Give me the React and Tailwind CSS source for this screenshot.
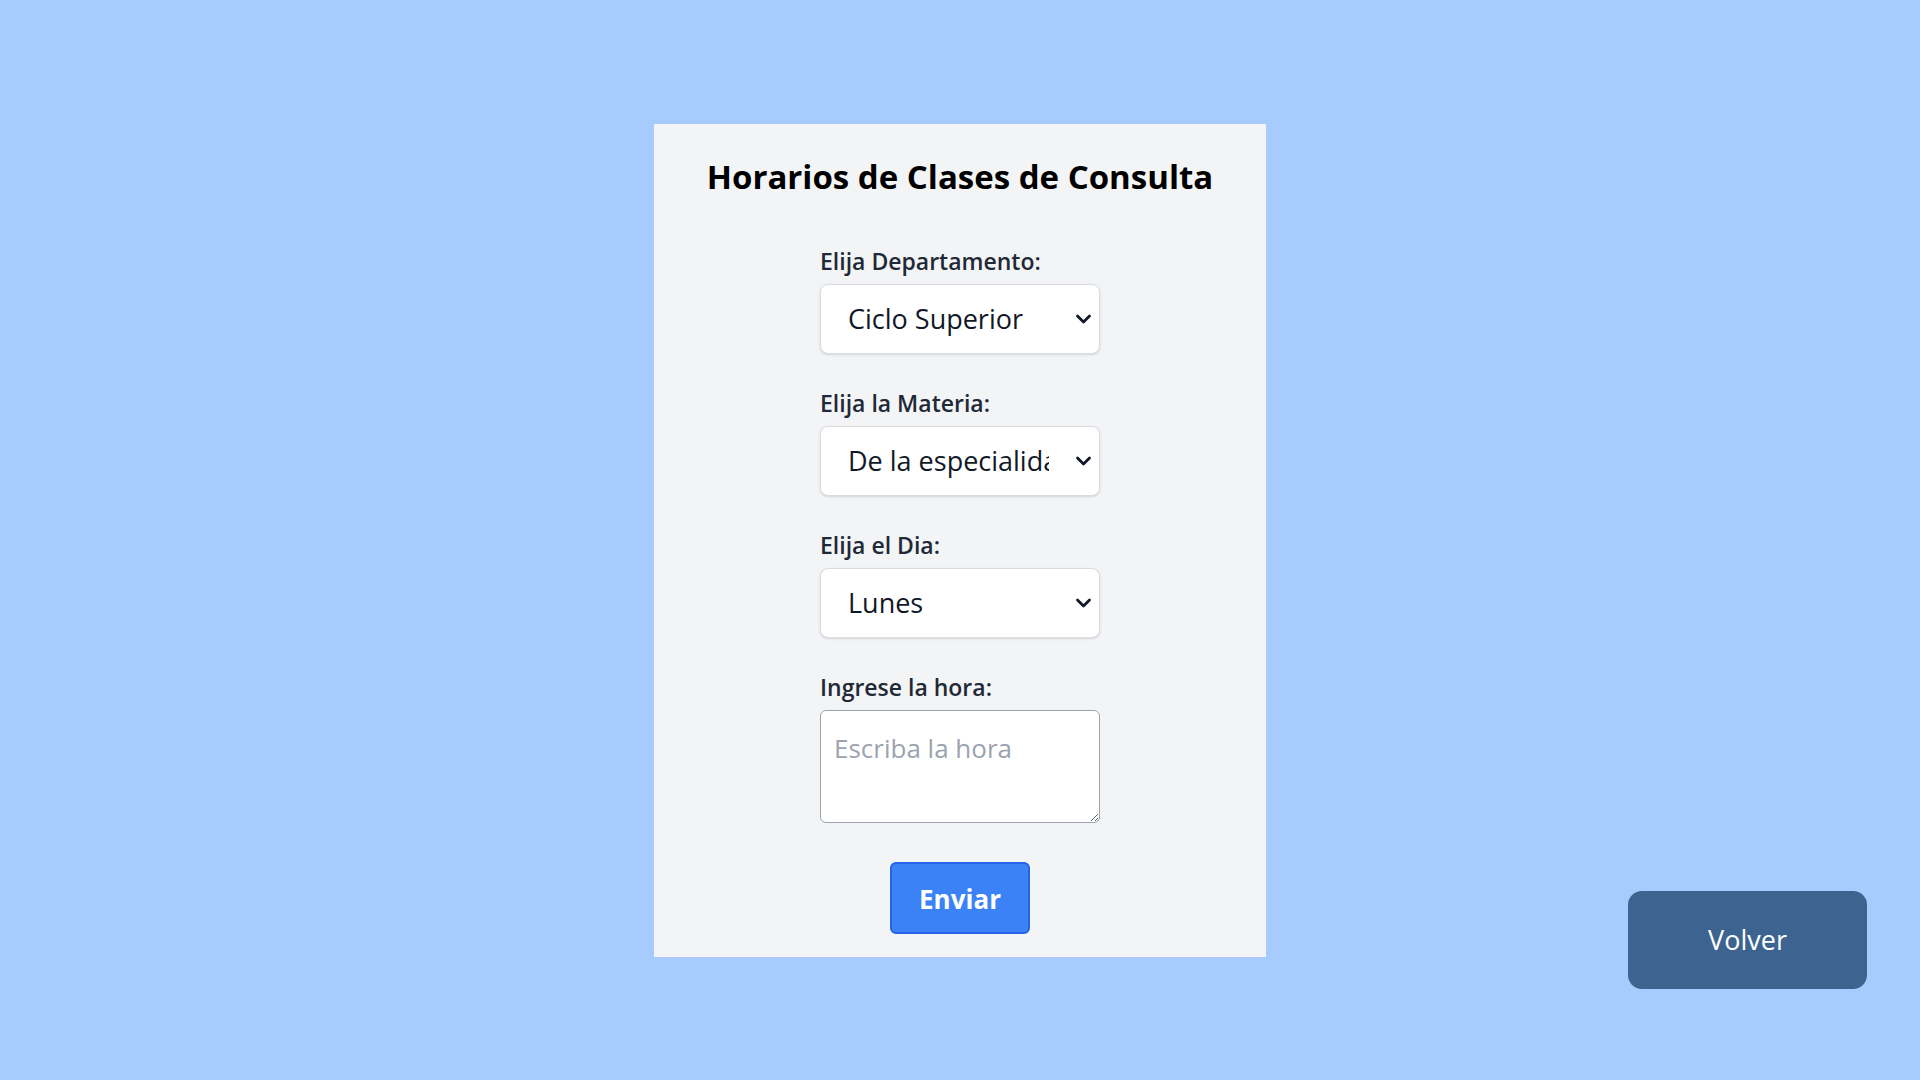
import React, { useState } from "react";

function Chevron() {
  return (
    <svg
      className="pointer-events-none absolute right-[8px] top-1/2 -translate-y-1/2"
      width="17"
      height="11"
      viewBox="0 0 17 11"
      fill="none"
    >
      <path d="M2.5 2.5l6 6 6-6" stroke="#111827" strokeWidth="2.8" strokeLinecap="round" strokeLinejoin="round" />
    </svg>
  );
}

function Campo({ label, value, onChange, opciones }) {
  return (
    <div className="mb-[33px]">
      <label className="mb-[7px] block text-[23px] leading-[32px] font-semibold text-[#1f2937]">
        {label}
      </label>
      <div className="relative">
        <select
          value={value}
          onChange={(e) => onChange(e.target.value)}
          className="block h-[70px] w-full appearance-none rounded-lg border border-[#d9dce1] bg-white pl-[27px] pr-[50px] pt-[2px] text-[27px] text-[#111827] shadow-sm outline-none"
        >
          {opciones.map((op) => (
            <option key={op} value={op}>
              {op}
            </option>
          ))}
        </select>
        <Chevron />
      </div>
    </div>
  );
}

export default function App() {
  const [depto, setDepto] = useState("Ciclo Superior");
  const [materia, setMateria] = useState("De la especialidad");
  const [dia, setDia] = useState("Lunes");
  const [hora, setHora] = useState("");

  return (
    <div className="relative flex min-h-screen items-center justify-center bg-[#a8cbfe] font-['Open_Sans',sans-serif]">
      <div className="w-[612px] bg-[#f3f4f6] px-8 pt-[35px] pb-[23px]">
        <h1 className="mb-[50px] text-center text-[33px] leading-[36px] font-bold text-black">
          Horarios de Clases de Consulta
        </h1>
        <form className="mx-auto w-[280px]" onSubmit={(e) => e.preventDefault()}>
          <Campo
            label="Elija Departamento:"
            value={depto}
            onChange={setDepto}
            opciones={["Ciclo Superior", "Ciclo Básico"]}
          />
          <Campo
            label="Elija la Materia:"
            value={materia}
            onChange={setMateria}
            opciones={["De la especialidad", "Generales"]}
          />
          <Campo
            label="Elija el Dia:"
            value={dia}
            onChange={setDia}
            opciones={["Lunes", "Martes", "Miércoles", "Jueves", "Viernes"]}
          />
          <div>
            <label className="mb-[7px] block text-[23px] leading-[32px] font-semibold text-[#1f2937]">
              Ingrese la hora:
            </label>
            <textarea
              value={hora}
              onChange={(e) => setHora(e.target.value)}
              placeholder="Escriba la hora"
              className="block h-[113px] w-full rounded-md border border-[#9ca3af] bg-white px-[13px] pt-[19px] pb-[8px] text-[26px] leading-[36px] text-[#111827] outline-none placeholder:text-[#9ca3af]"
            />
          </div>
          <div className="mt-[39px] flex justify-center">
            <button
              type="submit"
              className="h-[72px] w-[140px] rounded-md border-2 border-[#2563eb] bg-[#3b82f6] pt-[3px] text-[26px] font-bold text-white"
            >
              Enviar
            </button>
          </div>
        </form>
      </div>
      <button className="absolute right-[53px] bottom-[91px] h-[98px] w-[239px] rounded-[14px] bg-[#3d6490] text-[27px] text-white">
        Volver
      </button>
    </div>
  );
}
